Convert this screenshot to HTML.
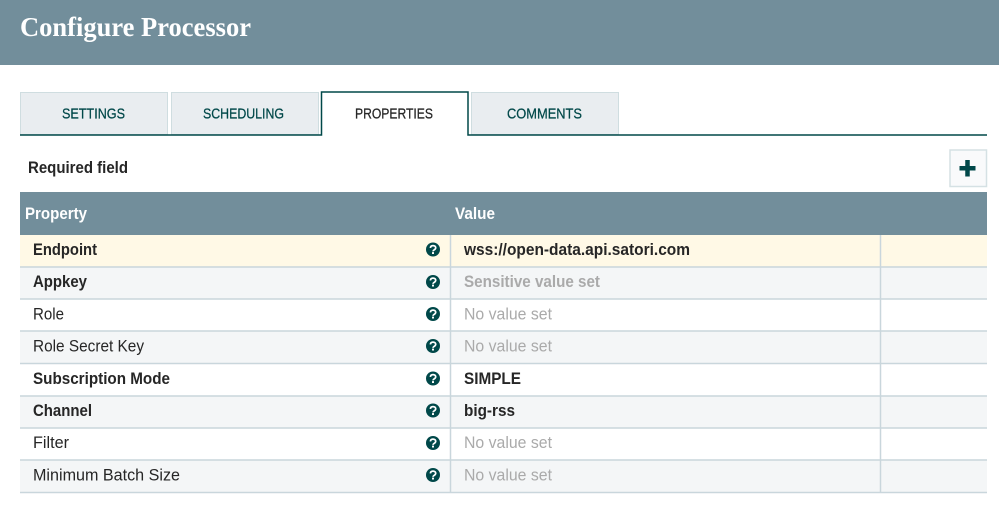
<!DOCTYPE html>
<html><head><meta charset="utf-8"><style>
html,body{margin:0;padding:0;background:#fff;width:999px;height:508px;overflow:hidden}
svg{display:block}
text{font-family:"Liberation Sans",sans-serif;font-size:16.6px;fill:#262626}
.b{font-weight:700}
.t{font-size:14.6px;fill:#004849;stroke:#004849;stroke-width:.25px}
.g{fill:#aaa}
</style></head><body>
<svg width="999" height="508" viewBox="0 0 999 508" xmlns="http://www.w3.org/2000/svg">
<defs>
<g id="h"><circle cx="0" cy="0" r="7" fill="#004849"/><path d="M-2.6 -1.6C-2.5 -3.2 -1.3 -3.9 0 -3.9C1.6 -3.9 2.7 -3 2.7 -1.7C2.7 -0.6 2 -0.1 1.2 0.4C0.5 0.8 0 1.1 0 1.9" fill="none" stroke="#fff" stroke-width="1.7"/><rect x="-1" y="2.6" width="2" height="1.9" fill="#fff"/></g>
</defs>
<rect x="0" y="0" width="999" height="65" fill="#728e9b"/>
<text x="20" y="36" textLength="231" lengthAdjust="spacingAndGlyphs" class="b" style="font-family:'Liberation Serif',serif;font-size:27px;fill:#fff">Configure Processor</text>

<!-- tabs -->
<rect x="20.5" y="92.5" width="147" height="42" fill="#e9edf0" stroke="#cfdde0"/>
<rect x="171.5" y="92.5" width="147" height="42" fill="#e9edf0" stroke="#cfdde0"/>
<rect x="471.5" y="92.5" width="147" height="42" fill="#e9edf0" stroke="#cfdde0"/>
<path d="M20 135H321.5V92H468V135H987" fill="none" stroke="#004849" stroke-width="1.5"/>
<text x="62" y="118.500" textLength="63" lengthAdjust="spacingAndGlyphs" class="t">SETTINGS</text>
<text x="203" y="118.500" textLength="81" lengthAdjust="spacingAndGlyphs" class="t">SCHEDULING</text>
<text x="355" y="118.500" textLength="78" lengthAdjust="spacingAndGlyphs" class="t" style="fill:#262626;stroke:#262626">PROPERTIES</text>
<text x="507" y="118.500" textLength="75" lengthAdjust="spacingAndGlyphs" class="t">COMMENTS</text>

<text x="28" y="173" textLength="100" lengthAdjust="spacingAndGlyphs" class="b">Required field</text>

<!-- add button -->
<rect x="950" y="150" width="36.500" height="36.500" fill="#f9fafb" stroke="#d5e1e4" stroke-width="1.500"/>
<path d="M967.500 160V176.500M959.500 168.200H975.500" stroke="#004849" stroke-width="4.500" fill="none"/>

<!-- table head -->
<rect x="20" y="192" width="967" height="43" fill="#728e9b"/>
<text x="25" y="219" textLength="62" lengthAdjust="spacingAndGlyphs" class="b" style="fill:#fff">Property</text>
<text x="455" y="219" textLength="40" lengthAdjust="spacingAndGlyphs" class="b" style="fill:#fff">Value</text>

<!-- rows -->
<rect x="20" y="235" width="967" height="32" fill="#fff9e6"/>
<rect x="20" y="267" width="967" height="32" fill="#f4f6f7"/>
<rect x="20" y="331" width="967" height="32" fill="#f4f6f7"/>
<rect x="20" y="396" width="967" height="32" fill="#f4f6f7"/>
<rect x="20" y="460" width="967" height="32" fill="#f4f6f7"/>
<g stroke="#c9d6dc" stroke-width="1.500">
<path d="M20 267H987M20 299H987M20 331H987M20 363.500H987M20 396H987M20 428H987M20 460H987M20 492.500H987"/>
<path d="M450.500 235V493M880.500 235V493"/>
</g>

<text x="33" y="255" textLength="64" lengthAdjust="spacingAndGlyphs" class="b">Endpoint</text>
<text x="33" y="287" textLength="54" lengthAdjust="spacingAndGlyphs" class="b">Appkey</text>
<text x="33" y="319.500" textLength="31" lengthAdjust="spacingAndGlyphs">Role</text>
<text x="33" y="351.500" textLength="111" lengthAdjust="spacingAndGlyphs">Role Secret Key</text>
<text x="33" y="384" textLength="137" lengthAdjust="spacingAndGlyphs" class="b">Subscription Mode</text>
<text x="33" y="416" textLength="59" lengthAdjust="spacingAndGlyphs" class="b">Channel</text>
<text x="33" y="448" textLength="36" lengthAdjust="spacingAndGlyphs">Filter</text>
<text x="33" y="480.500" textLength="147" lengthAdjust="spacingAndGlyphs">Minimum Batch Size</text>

<text x="464" y="255" textLength="226" lengthAdjust="spacingAndGlyphs" class="b">wss://open-data.api.satori.com</text>
<text x="464" y="287" textLength="136" lengthAdjust="spacingAndGlyphs" class="b g">Sensitive value set</text>
<text x="464" y="319.500" textLength="88" lengthAdjust="spacingAndGlyphs" class="g">No value set</text>
<text x="464" y="351.500" textLength="88" lengthAdjust="spacingAndGlyphs" class="g">No value set</text>
<text x="464" y="384" textLength="57" lengthAdjust="spacingAndGlyphs" class="b">SIMPLE</text>
<text x="464" y="416" textLength="51" lengthAdjust="spacingAndGlyphs" class="b">big-rss</text>
<text x="464" y="448" textLength="88" lengthAdjust="spacingAndGlyphs" class="g">No value set</text>
<text x="464" y="480.500" textLength="88" lengthAdjust="spacingAndGlyphs" class="g">No value set</text>

<use href="#h" x="433" y="249.500"/>
<use href="#h" x="433" y="282"/>
<use href="#h" x="433" y="314"/>
<use href="#h" x="433" y="346"/>
<use href="#h" x="433" y="378.500"/>
<use href="#h" x="433" y="410.500"/>
<use href="#h" x="433" y="443"/>
<use href="#h" x="433" y="475"/>
</svg>
</body></html>
